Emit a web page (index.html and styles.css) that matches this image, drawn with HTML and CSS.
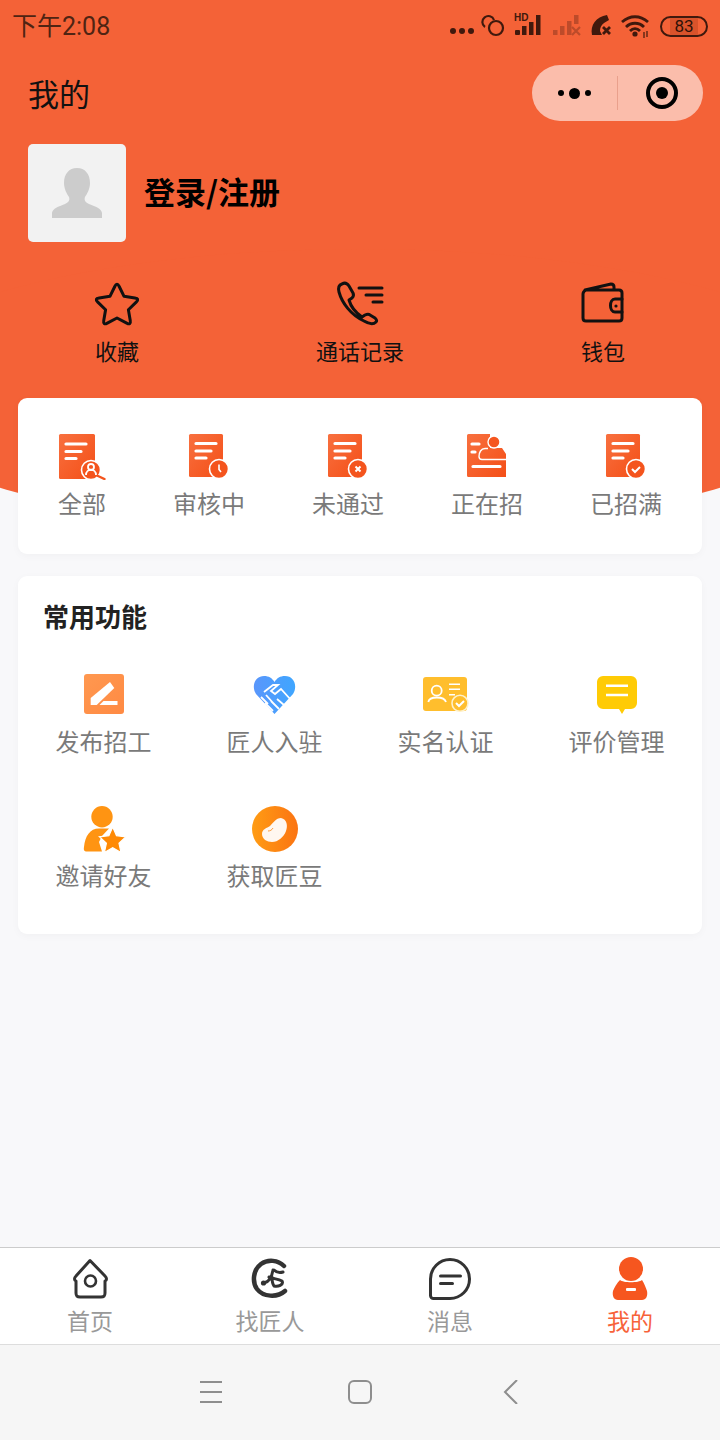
FILE: index.html
```html
<!DOCTYPE html>
<html lang="zh-CN">
<head>
  <meta charset="UTF-8">
  <meta name="viewport" content="width=device-width, initial-scale=1.0">
  <title>我的</title>
  <link rel="stylesheet" href="styles.css">
</head>

<body>
  <!-- shared gradients -->
  <svg class="defs" width="0" height="0">
    <defs>
      <linearGradient id="docFill" x1="0" y1="0" x2="1" y2="1">
        <stop offset="0" stop-color="#f8703f"/>
        <stop offset="1" stop-color="#f44f17"/>
      </linearGradient>
      <linearGradient id="penFill" x1="0" y1="0" x2="1" y2="1">
        <stop offset="0" stop-color="#ff9850"/>
        <stop offset="1" stop-color="#ff8a43"/>
      </linearGradient>
      <linearGradient id="beanFill" x1="0" y1="0" x2="1" y2="0">
        <stop offset="0" stop-color="#ff9c14"/>
        <stop offset="1" stop-color="#fb7412"/>
      </linearGradient>
      <linearGradient id="heartFill" x1="0" y1="0" x2="1" y2="0">
        <stop offset="0" stop-color="#5a96fb"/>
        <stop offset="1" stop-color="#3fa6ff"/>
      </linearGradient>
    </defs>
  </svg>

  <div class="hero">
    <!-- Status bar -->
    <div class="status-bar">
      <span class="status-time">下午2:08</span>
      <div class="status-icons">
        <svg class="st-dots" viewBox="0 0 24 12"><circle cx="3" cy="6" r="3"/><circle cx="12" cy="6" r="3"/><circle cx="21" cy="6" r="3"/></svg>
        <svg class="st-rings" viewBox="0 0 24 24"><path d="M4 13a6 6 0 1 1 9-7"/><circle cx="15" cy="14" r="7"/></svg>
        <div class="st-signal">
          <span class="st-hd">HD</span>
          <svg viewBox="0 0 30 22"><rect x="2" y="15" width="5" height="5" rx="1"/><rect x="9" y="11" width="4.500" height="9"/><rect x="16" y="7" width="4.500" height="13"/><rect x="23" y="0" width="4.500" height="20"/></svg>
        </div>
        <svg class="st-signal-off" viewBox="0 0 30 22"><rect x="1" y="15" width="4.500" height="5"/><rect x="8" y="11" width="4.500" height="9"/><rect x="15" y="6" width="4.500" height="14"/><rect x="22" y="0" width="4.500" height="9"/><path d="M20 12l8 8M28 12l-8 8"/></svg>
        <svg class="st-phone" viewBox="0 0 24 22"><path class="st-fill" d="M18 0l2 5-5 3c-3 2-4 5-4 8l2 4H3C1 10 7 2 18 0z"/><path class="st-line" d="M14 12l7 7M21 12l-7 7"/></svg>
        <svg class="st-wifi" viewBox="0 0 30 24"><path class="st-line" d="M2 8c8-7 18-7 26 0M6 13c5-5 13-5 18 0M10 17c3-3 7-3 10 0"/><circle class="st-fill" cx="15" cy="20" r="2.600"/><path class="st-thin" d="M24 18v6M27 17v6"/></svg>
        <div class="st-battery"><span class="st-level">83</span></div>
      </div>
    </div>

    <!-- Title -->
    <div class="title-row">
      <h1 class="page-title">我的</h1>
      <div class="capsule">
        <div class="capsule-dots"><i></i><i class="big"></i><i></i></div>
        <div class="capsule-line"></div>
        <div class="capsule-record"><i></i></div>
      </div>
    </div>

    <!-- User -->
    <div class="user-row">
      <div class="avatar">
        <svg viewBox="0 0 98 98"><path d="M49 24c-8 0-13 6-13 15 0 6 3 11 5 14 1 3 0 5-4 7-7 3-12 4-13 9v5h50v-5c-1-5-6-6-13-9-4-2-5-4-4-7 2-3 5-8 5-14 0-9-5-15-13-15z" fill="#ccc"/></svg>
      </div>
      <div class="user-name">登录/注册</div>
    </div>

    <!-- Shortcuts -->
    <div class="shortcuts">
      <div class="shortcut">
        <svg viewBox="0 0 100 44"><path d="M47.800 5.500Q50 1 52.200 5.500L57.050 15.300 67.850 16.900Q72.800 17.600 69.200 21.100L61.400 28.700 63.250 39.500Q64.100 44.400 59.700 42.100L50 37 40.300 42.100Q35.900 44.400 36.750 39.500L38.600 28.700 30.800 21.100Q27.200 17.600 32.150 16.900L42.950 15.300z"/></svg>
        <span>收藏</span>
      </div>
      <div class="shortcut">
        <svg viewBox="0 0 100 44"><path d="M32 3c3-2 5-1 7 2l4 7c1 2 0 4-1 5l-3 2c2 7 7 13 13 17l3-2c2-1 4-1 5 0l5 3c2 2 2 3 1 4-3 3-7 2-12-1C41 34 32 22 29 11c-1-4 0-7 3-8z"/><path d="M49 7h23M56 14h16M63 21h9"/></svg>
        <span>通话记录</span>
      </div>
      <div class="shortcut">
        <svg viewBox="0 0 100 44"><path d="M32 9l26-6c2 0 3 1 3 3v3M33 9c-2 1-3 2-3 4v24c0 2 1 3 3 3h33c2 0 3-1 3-3V12c0-2-1-3-3-3H33"/><path d="M69 18h-7c-6 0-6 13 0 13h7"/><circle class="wallet-dot" cx="63" cy="25" r="1.600"/></svg>
        <span>钱包</span>
      </div>
    </div>
  </div>

  <main class="main">
    <!-- Recruit status -->
    <section class="card status-card">
      <div class="status-item">
        <svg viewBox="0 0 48 46">
          <rect x="1" y="0" width="36" height="45" rx="1.500" fill="url(#docFill)"/>
          <path class="doc-line" d="M8 10h20M8 17.500h15M8 24.500h10"/>
          <circle cx="33" cy="36" r="9.500" fill="#f4541d" stroke="#fff" stroke-width="1.600"/>
          <circle cx="33" cy="33" r="3" fill="none" stroke="#fff" stroke-width="1.800"/>
          <path d="M28 41c0-7 10-7 10 0" fill="none" stroke="#fff" stroke-width="1.800"/>
          <path d="M40 42l6.500 3" stroke="#f4541d" stroke-width="2.400" stroke-linecap="round"/>
        </svg>
        <span>全部</span>
      </div>
      <div class="status-item">
        <svg viewBox="0 0 48 46">
          <rect x="4" y="0" width="34" height="43" rx="1.500" fill="url(#docFill)"/>
          <path class="doc-line" d="M11 9.500h20M11 17h15M11 24h10"/>
          <circle cx="34" cy="35" r="9.500" fill="#f4541d" stroke="#fff" stroke-width="1.600"/>
          <path d="M34 30.500v5l2 2.500" fill="none" stroke="#fff" stroke-width="1.600"/>
        </svg>
        <span>审核中</span>
      </div>
      <div class="status-item">
        <svg viewBox="0 0 48 46">
          <rect x="4" y="0" width="34" height="43" rx="1.500" fill="url(#docFill)"/>
          <path class="doc-line" d="M11 9.500h20M11 17h15M11 24h10"/>
          <circle cx="34" cy="35" r="9.500" fill="#f4541d" stroke="#fff" stroke-width="1.600"/>
          <path d="M31.500 32.500l5 5M36.500 32.500l-5 5" fill="none" stroke="#fff" stroke-width="2"/>
        </svg>
        <span>未通过</span>
      </div>
      <div class="status-item">
        <svg viewBox="0 0 48 46">
          <path d="M5.500 0H27V14H39L43 20V43H5.500A1.500 1.500 0 0 1 4 41.500V1.500A1.500 1.500 0 0 1 5.500 0z" fill="url(#docFill)"/>
          <path class="doc-line" d="M9 10h7M9 18h3M10 32.500h27"/>
          <circle cx="31" cy="8" r="6" fill="#f5561f" stroke="#fff" stroke-width="1.400"/>
          <path d="M43 25.500H19c-2 0-3-1-3-3 0-4 2-8 6-8h3" fill="none" stroke="#fff" stroke-width="1.400"/>
        </svg>
        <span>正在招</span>
      </div>
      <div class="status-item">
        <svg viewBox="0 0 48 46">
          <rect x="4" y="0" width="34" height="43" rx="1.500" fill="url(#docFill)"/>
          <path class="doc-line" d="M11 9.500h20M11 17h15M11 24h10"/>
          <circle cx="34" cy="35" r="9.500" fill="#f4541d" stroke="#fff" stroke-width="1.600"/>
          <path d="M30 35l3 3 5-5" fill="none" stroke="#fff" stroke-width="2"/>
        </svg>
        <span>已招满</span>
      </div>
    </section>

    <!-- Common functions -->
    <section class="card func-card">
      <h2 class="func-title">常用功能</h2>
      <div class="func-grid">
        <div class="func-item">
          <svg viewBox="0 0 47 48">
            <rect x="4" y="4" width="40" height="40" rx="3" fill="url(#penFill)"/>
            <path d="M10.700 28l19.300-16 4.300 6-17.600 17h-6z" fill="#fff"/>
            <path d="M23.500 31h14v4h-18z" fill="#fff"/>
          </svg>
          <span>发布招工</span>
        </div>
        <div class="func-item">
          <svg viewBox="0 0 47 48">
            <path d="M23.500 44L5 24C0 16 4 6 13 6c5 0 8 2 10.500 6C26 8 29 6 34 6c9 0 13 10 8 18z" fill="url(#heartFill)"/>
            <path d="M13 22l9-7 5 0-7 6 4 3 6-5 10 11" fill="none" stroke="#fff" stroke-width="1.800"/>
            <path d="M10 27l7 7M15 25l9 10M14 33l8 8M20 31l8 8M26 29l7 6" stroke="#fff" stroke-width="1.800"/>
          </svg>
          <span>匠人入驻</span>
        </div>
        <div class="func-item">
          <svg viewBox="0 0 47 48">
            <rect x="1" y="7" width="44" height="34" rx="3" fill="#ffbe2d"/>
            <circle cx="14.700" cy="20.700" r="5" fill="none" stroke="#fff" stroke-width="1.800"/>
            <path d="M6.300 32c1-6 16-6 17.700 0" fill="none" stroke="#fff" stroke-width="1.800"/>
            <path d="M27 14.300h11M27 19.300h11M27 24.700h6" stroke="#fff" stroke-width="1.600"/>
            <circle cx="38" cy="33.300" r="8" fill="#ffbe2d" stroke="#fff1c9" stroke-width="1.600"/>
            <path d="M34 33l3 3 5-5" fill="none" stroke="#fff" stroke-width="2"/>
          </svg>
          <span>实名认证</span>
        </div>
        <div class="func-item">
          <svg viewBox="0 0 47 48">
            <path d="M10 6h28a6 6 0 0 1 6 6v21a6 6 0 0 1-6 6h-6l-3 5-3-5H10a6 6 0 0 1-6-6V12a6 6 0 0 1 6-6z" fill="#ffcb05"/>
            <path d="M13 15.700h22M13 25h22" stroke="#fff" stroke-width="2.500"/>
          </svg>
          <span>评价管理</span>
        </div>
        <div class="func-item">
          <svg viewBox="0 0 47 48">
            <circle cx="22" cy="12.700" r="10.700" fill="#ff9412"/>
            <path d="M7 47.500C4 47.500 3.500 46 4 43 5 32 10 24.500 19 24.500H29L22 32 19 38 22 47.500z" fill="#ff9412"/>
            <path d="M32.700 23l3.800 8.800 9.500 1-7 6.500 2 9.200-8.300-4.800-8.300 4.800 2-9.200-7-6.500 9.500-1z" fill="#ff8a05" stroke="#fff" stroke-width="1.200"/>
          </svg>
          <span>邀请好友</span>
        </div>
        <div class="func-item">
          <svg viewBox="0 0 47 48">
            <circle cx="24" cy="25" r="23" fill="url(#beanFill)"/>
            <path d="M11 30c0-5 5-6 8-8 3-3 6-8 11-8 6 1 7 8 5 13-2 6-8 11-14 11-5 0-10-3-10-8z" fill="#fff7f0"/>
            <path d="M17 27c2 0 4-1 5-3" fill="none" stroke="#fb9a3a" stroke-width="1"/>
          </svg>
          <span>获取匠豆</span>
        </div>
      </div>
    </section>
  </main>

  <!-- Tab bar -->
  <nav class="tab-bar">
    <div class="tab">
      <svg viewBox="0 0 44 44"><path d="M22 3.500L8 19c-2 2-2 4 0 5v12c0 3 1 4 4 4h21c3 0 4-1 4-4V24c2-1 2-3 0-5z"/><circle class="thin" cx="22.500" cy="24" r="5.500"/></svg>
      <span>首页</span>
    </div>
    <div class="tab">
      <svg viewBox="0 0 44 44"><path class="thick" d="M36 9C30 3 20 2 13 7 5 13 4 25 9 32c6 8 20 9 28 2"/><circle class="dot" cx="15.500" cy="26" r="2.600"/><path d="M16 26c6-1 8-7 9-13M26 13c3 3 6 3 9 2M21 20c5 2 9 2 13 4 2 4-4 6-8 5-2-3-2-7-2-9"/></svg>
      <span>找匠人</span>
    </div>
    <div class="tab">
      <svg viewBox="0 0 44 44"><path d="M2.500 22a19.500 19.500 0 1 1 19.500 19.500H5.500a3 3 0 0 1-3-3z"/><path d="M12.500 19h20M12.500 26.500h12"/></svg>
      <span>消息</span>
    </div>
    <div class="tab tab-active">
      <svg viewBox="0 0 44 44">
        <path d="M12 23c3 3 19 3 22 0 2 3 4 8 5 11 1 5-1 9-5 9H10c-4 0-6-4-5-9 1-3 4-8 7-11z" fill="#f6561f"/>
        <circle cx="23" cy="12" r="12" fill="#f6561f"/>
        <rect x="18" y="31" width="10" height="3" rx="1" fill="#fff"/>
      </svg>
      <span>我的</span>
    </div>
  </nav>

  <!-- Android nav bar -->
  <div class="nav-bar">
    <svg viewBox="0 0 24 24"><path d="M1 2h22M1 12h22M1 22h22"/></svg>
    <svg viewBox="0 0 24 24"><rect x="1" y="1" width="22" height="22" rx="5"/></svg>
    <svg viewBox="0 0 24 24"><path d="M20 0L8 12l12 12"/></svg>
  </div>
</body>
</html>
```

FILE: styles.css
```css
* {
  margin: 0;
  padding: 0;
  box-sizing: border-box;
}

html, body {
  height: 100%;
}

body {
  display: flex;
  flex-direction: column;
  min-height: 100vh;
  background: #f8f8fa;
  font-family: "Noto Sans CJK SC", "Noto Sans", sans-serif;
}

.defs {
  position: absolute;
}

svg {
  display: block;
}

/* ---- orange header ---- */
.hero {
  position: relative;
  height: 398px;
  background: #f46237;
}

.hero::after {
  content: '';
  position: absolute;
  top: 249px;
  left: 0;
  width: 720px;
  height: 282px;
  background: #f46237;
  clip-path: ellipse(500px 141px at 360px 141px);
}

.status-bar {
  position: relative;
  z-index: 1;
  display: flex;
  justify-content: space-between;
  align-items: center;
  height: 52px;
  padding: 0 12px;
}

.status-time {
  padding-bottom: 4px;
  font-family: "Roboto", "Noto Sans CJK SC", sans-serif;
  font-size: 25px;
  color: #4f2413;
}

.status-icons {
  display: flex;
  align-items: center;
  fill: #40190d;
}

.st-dots { width: 24px; height: 12px; margin-top: 10px; }

.st-rings {
  width: 24px;
  height: 24px;
  margin: -1px 0 0 7px;
  fill: none;
  stroke: #40190d;
  stroke-width: 2.2;
}

.st-signal {
  position: relative;
  width: 30px;
  height: 22px;
  margin-left: 8px;
}

.st-signal svg { width: 30px; height: 22px; }

.st-hd {
  position: absolute;
  top: -2px;
  left: 1px;
  font-family: "Liberation Sans", sans-serif;
  font-size: 10px;
  font-weight: 700;
  line-height: 10px;
  color: #40190d;
}

.st-signal-off {
  width: 30px;
  height: 22px;
  margin-left: 9px;
  opacity: 0.3;
}

.st-signal-off path { fill: none; stroke: #40190d; stroke-width: 2.2; }

.st-phone { width: 24px; height: 22px; margin-left: 7px; }

.st-wifi { width: 30px; height: 24px; margin-left: 7px; }

.st-fill { fill: #40190d; }

.st-line {
  fill: none;
  stroke: #40190d;
  stroke-width: 2.8;
}

.st-thin {
  fill: none;
  stroke: #40190d;
  stroke-width: 1.2;
}

.st-battery {
  display: flex;
  align-items: center;
  justify-content: center;
  width: 48px;
  height: 21px;
  margin-left: 10px;
  border: 2px solid #40190d;
  border-radius: 11px;
}

.st-level {
  padding: 0 4px;
  font-family: "Roboto", sans-serif;
  font-size: 17px;
  line-height: 17px;
  color: #2e1208;
  background: #d9532b;
}

.title-row {
  position: relative;
  z-index: 1;
  display: flex;
  justify-content: space-between;
  align-items: center;
  height: 82px;
  padding: 0 17px 0 28px;
}

.page-title {
  padding-bottom: 2px;
  font-size: 31px;
  font-weight: 400;
  color: #111;
}

.capsule {
  display: flex;
  align-items: center;
  width: 171px;
  height: 56px;
  border-radius: 28px;
  background: #fbbdab;
}

.capsule-dots {
  display: flex;
  justify-content: center;
  align-items: center;
  gap: 5px;
  width: 85px;
}

.capsule-dots i {
  width: 6px;
  height: 6px;
  border-radius: 50%;
  background: #000;
}

.capsule-dots i.big {
  width: 11px;
  height: 11px;
}

.capsule-line {
  width: 1px;
  height: 34px;
  background: #e9a08c;
}

.capsule-record {
  display: flex;
  justify-content: center;
  align-items: center;
  width: 32px;
  height: 32px;
  margin-left: 28px;
  border: 4px solid #000;
  border-radius: 50%;
}

.capsule-record i {
  width: 12px;
  height: 12px;
  border-radius: 50%;
  background: #000;
}

.user-row {
  position: relative;
  z-index: 1;
  display: flex;
  align-items: center;
  gap: 18px;
  margin: 10px 0 0 28px;
}

.avatar {
  width: 98px;
  height: 98px;
  border-radius: 5px;
  background: #f2f2f2;
}

.user-name {
  padding-bottom: 5px;
  font-size: 31px;
  font-weight: 700;
  color: #000;
}

.shortcuts {
  position: relative;
  z-index: 1;
  display: flex;
  justify-content: space-between;
  margin-top: 39px;
  padding: 0 67px;
}

.shortcut {
  display: flex;
  flex-direction: column;
  align-items: center;
  width: 100px;
  font-size: 22px;
  line-height: 30px;
  color: #111;
}

.shortcut svg {
  width: 100px;
  height: 44px;
  margin-bottom: 10px;
  fill: none;
  stroke: #111;
  stroke-width: 3;
  stroke-linecap: round;
  stroke-linejoin: round;
  overflow: visible;
}

.shortcut .wallet-dot { fill: #111; stroke: none; }

/* ---- cards ---- */
.main {
  position: relative;
  z-index: 1;
  flex: 1;
  padding: 0 18px;
}

.card {
  border-radius: 9px;
  background: #fff;
  box-shadow: 0 2px 8px rgba(0, 0, 0, 0.03);
}

.status-card {
  display: flex;
  justify-content: space-between;
  height: 156px;
  padding: 36px 40px 0;
}

.status-item {
  display: flex;
  flex-direction: column;
  align-items: center;
  font-size: 24px;
  line-height: 32px;
  color: #7a7a7a;
}

.status-item svg {
  width: 48px;
  height: 46px;
  margin-bottom: 7px;
}

.doc-line {
  fill: none;
  stroke: #fff;
  stroke-width: 3.2;
  stroke-linecap: round;
}

.func-card {
  height: 358px;
  margin-top: 22px;
  padding-top: 22px;
}

.func-title {
  padding-left: 25px;
  font-size: 26px;
  font-weight: 700;
  line-height: 36px;
  color: #222;
}

.func-grid {
  display: grid;
  grid-template-columns: repeat(4, 1fr);
  row-gap: 46px;
  margin-top: 36px;
}

.func-item {
  display: flex;
  flex-direction: column;
  align-items: center;
  height: 88px;
  font-size: 24px;
  line-height: 32px;
  color: #7a7a7a;
}

.func-item svg {
  width: 47px;
  height: 48px;
  margin-bottom: 7px;
}

/* ---- bottom tabs ---- */
.tab-bar {
  display: flex;
  height: 98px;
  border-top: 1px solid #ccc;
  border-bottom: 1px solid #ddd;
  background: #fff;
}

.tab {
  display: flex;
  flex: 1;
  flex-direction: column;
  align-items: center;
  padding-top: 9px;
  font-size: 23px;
  line-height: 30px;
  color: #999;
}

.tab svg {
  width: 44px;
  height: 44px;
  margin-bottom: 4px;
  fill: none;
  stroke: #333;
  stroke-width: 3;
  stroke-linecap: round;
  stroke-linejoin: round;
}

.tab svg .thick { stroke-width: 4.5; }

.tab svg .thin { stroke-width: 2.6; }

.tab svg .dot { fill: #333; stroke: none; }

.tab-active { color: #f7623a; }

.tab-active svg { stroke: none; }

.nav-bar {
  display: flex;
  justify-content: center;
  align-items: center;
  gap: 125px;
  height: 95px;
  padding-bottom: 1px;
  background: #f6f6f6;
}

.nav-bar svg {
  width: 24px;
  height: 24px;
  fill: none;
  stroke: #8e8e8e;
  stroke-width: 2;
}
```
